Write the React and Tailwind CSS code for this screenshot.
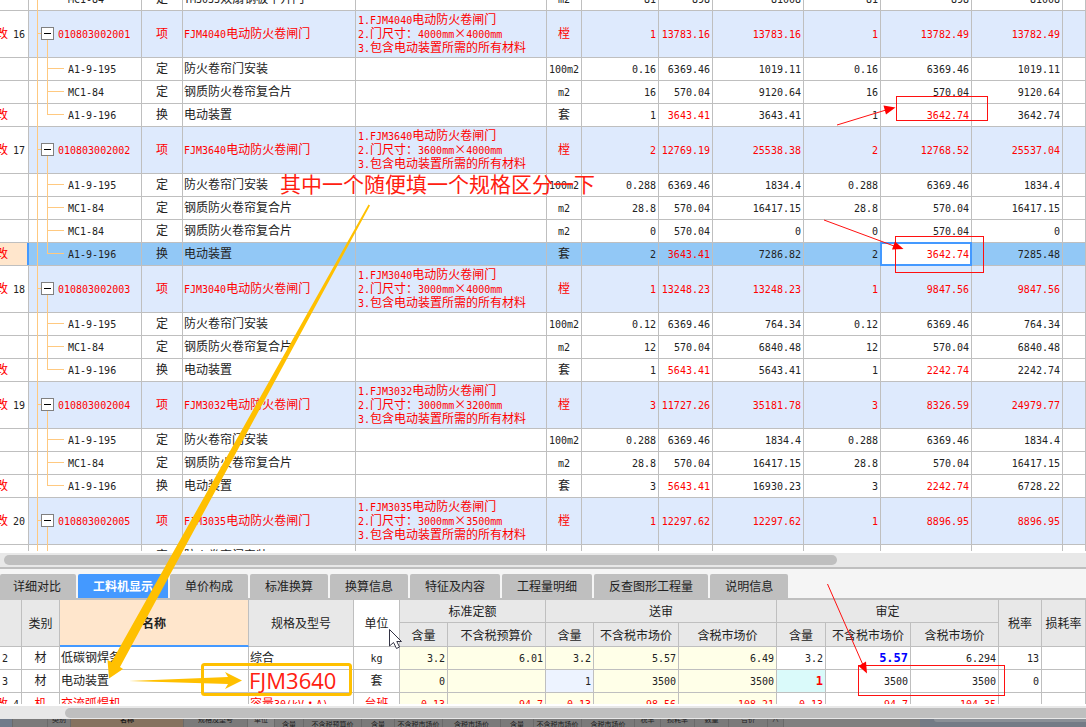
import React, { useState } from "react";

// theme
// grid line: #bfbfbf, item row: #deeafd, selected: #92c8f6, accent: #4499ff

const GROUPS = [
  {
    id: "prev",
    rows: [
      { code: "MC1-84", type: "定", name: "TM3033双扇钢板平开门", unit: "m2", v: ["81", "898", "81008", "81", "898", "81008"] },
    ],
  },
  {
    id: "16",
    code: "010803002001",
    name: "FJM4040电动防火卷闸门",
    size: "4000mm×4000mm",
    v: ["1", "13783.16", "13783.16", "1", "13782.49", "13782.49"],
    rows: [
      { code: "A1-9-195", type: "定", name: "防火卷帘门安装", unit: "100m2", v: ["0.16", "6369.46", "1019.11", "0.16", "6369.46", "1019.11"] },
      { code: "MC1-84", type: "定", name: "钢质防火卷帘复合片", unit: "m2", v: ["16", "570.04", "9120.64", "16", "570.04", "9120.64"] },
      { code: "A1-9-196", type: "换", name: "电动装置", unit: "套", changed: true, red: [1, 4], v: ["1", "3643.41", "3643.41", "1", "3642.74", "3642.74"] },
    ],
  },
  {
    id: "17",
    code: "010803002002",
    name: "FJM3640电动防火卷闸门",
    size: "3600mm×4000mm",
    v: ["2", "12769.19", "25538.38", "2", "12768.52", "25537.04"],
    rows: [
      { code: "A1-9-195", type: "定", name: "防火卷帘门安装", unit: "100m2", v: ["0.288", "6369.46", "1834.4", "0.288", "6369.46", "1834.4"] },
      { code: "MC1-84", type: "定", name: "钢质防火卷帘复合片", unit: "m2", v: ["28.8", "570.04", "16417.15", "28.8", "570.04", "16417.15"] },
      { code: "MC1-84", type: "定", name: "钢质防火卷帘复合片", unit: "m2", v: ["0", "570.04", "0", "0", "570.04", "0"] },
      { code: "A1-9-196", type: "换", name: "电动装置", unit: "套", changed: true, selected: true, red: [1, 4], v: ["2", "3643.41", "7286.82", "2", "3642.74", "7285.48"] },
    ],
  },
  {
    id: "18",
    code: "010803002003",
    name: "FJM3040电动防火卷闸门",
    size: "3000mm×4000mm",
    v: ["1", "13248.23", "13248.23", "1", "9847.56", "9847.56"],
    rows: [
      { code: "A1-9-195", type: "定", name: "防火卷帘门安装", unit: "100m2", v: ["0.12", "6369.46", "764.34", "0.12", "6369.46", "764.34"] },
      { code: "MC1-84", type: "定", name: "钢质防火卷帘复合片", unit: "m2", v: ["12", "570.04", "6840.48", "12", "570.04", "6840.48"] },
      { code: "A1-9-196", type: "换", name: "电动装置", unit: "套", changed: true, red: [1, 4], v: ["1", "5643.41", "5643.41", "1", "2242.74", "2242.74"] },
    ],
  },
  {
    id: "19",
    code: "010803002004",
    name: "FJM3032电动防火卷闸门",
    size: "3000mm×3200mm",
    v: ["3", "11727.26", "35181.78", "3", "8326.59", "24979.77"],
    rows: [
      { code: "A1-9-195", type: "定", name: "防火卷帘门安装", unit: "100m2", v: ["0.288", "6369.46", "1834.4", "0.288", "6369.46", "1834.4"] },
      { code: "MC1-84", type: "定", name: "钢质防火卷帘复合片", unit: "m2", v: ["28.8", "570.04", "16417.15", "28.8", "570.04", "16417.15"] },
      { code: "A1-9-196", type: "换", name: "电动装置", unit: "套", changed: true, red: [1, 4], v: ["3", "5643.41", "16930.23", "3", "2242.74", "6728.22"] },
    ],
  },
  {
    id: "20",
    code: "010803002005",
    name: "FJM3035电动防火卷闸门",
    size: "3000mm×3500mm",
    v: ["1", "12297.62", "12297.62", "1", "8896.95", "8896.95"],
    rows: [
      { code: "A1-9-195", type: "定", name: "防火卷帘门安装", unit: "100m2", v: ["0.288", "6369.46", "1834.4", "0.288", "6369.46", "1834.4"] },
      { code: "MC1-84", type: "定", name: "钢质防火卷帘复合片", unit: "m2", v: ["28.8", "570.04", "16417.15", "28.8", "570.04", "16417.15"] },
    ],
  },
];

const TABS = ["详细对比", "工料机显示", "单价构成", "标准换算", "换算信息", "特征及内容", "工程量明细", "反查图形工程量", "说明信息"];

const MATERIALS = [
  { no: "2", type: "材", name: "低碳钢焊条", spec: "综合", unit: "kg", v: ["3.2", "6.01", "3.2", "5.57", "6.49", "3.2", "5.57", "6.294"], tax: "13" },
  { no: "3", type: "材", name: "电动装置", spec: "", unit: "套", v: ["0", "", "1", "3500", "3500", "1", "3500", "3500"], tax: "0" },
  { no: "4", type: "机", name: "交流弧焊机", spec: "容量30(kV·A)", unit: "台班", changed: true, v: ["0.13", "94.7", "0.13", "98.56", "108.21", "0.13", "94.7", "104.35"], tax: "" },
];

// Latin runs use a half-width mono face next to the full-width Chinese glyphs
const Txt = ({ children }) => {
  const parts = String(children || "").match(/[\x20-\x7e]+|[×·]|[^\x20-\x7e×·]+/g) || [];
  return parts.map((part, i) => {
    if (part === "×" || part === "·") {
      return <span key={i} className="inline-block w-3 text-center leading-3">{part}</span>;
    }
    if (/^[\x20-\x7e]/.test(part)) {
      return <span key={i} className="font-['DejaVu_Sans_Mono',monospace] text-[10px] leading-none">{part}</span>;
    }
    return <React.Fragment key={i}>{part}</React.Fragment>;
  });
};

const Cell = ({ className = "", children }) => (
  <td className={`relative border-r border-b border-[#bfbfbf] pb-0.5 whitespace-nowrap ${className}`}>{children}</td>
);

const Gutter = ({ changed, no, selected }) => (
  <Cell className={selected ? "bg-[#ffe6cc]" : "bg-white"}>
    <div className="-ml-1 flex items-center gap-[5px]">
      {changed && <span className="text-[#ff0000]">改</span>}
      {no && <span className="text-[#222222]"><Txt>{no}</Txt></span>}
    </div>
    {selected && <span className="absolute inset-y-0 -right-px w-0.5 bg-[#4499ff]" />}
  </Cell>
);

const ItemRow = ({ group, open, onToggle }) => (
  <tr className="h-[47px] bg-[#deeafd] text-[#ff0000]">
    <Gutter changed no={group.id} />
    <Cell className="pl-[29px]">
      <span className="absolute -top-px -bottom-px left-2 w-px bg-[#ffc980]" />
      <span className="absolute top-1/2 left-2 -mt-px h-px w-1 bg-[#ffc980]" />
      {open && <span className="absolute top-1/2 -bottom-px left-[18px] w-px bg-[#ffc980]" />}
      <button
        type="button"
        aria-label="展开"
        aria-expanded={open}
        onClick={onToggle}
        className="absolute top-4 left-3 flex size-[13px] items-center justify-center border border-[#808080] bg-white"
      >
        <span className="h-px w-[7px] bg-black" />
        {!open && <span className="absolute h-[7px] w-px bg-black" />}
      </button>
      <Txt>{group.code}</Txt>
    </Cell>
    <Cell className="text-center">项</Cell>
    <Cell className="pl-px"><Txt>{group.name}</Txt></Cell>
    <Cell className="pl-0.5">
      <div><Txt>{"1." + group.name}</Txt></div>
      <div><Txt>{"2.门尺寸：" + group.size}</Txt></div>
      <div><Txt>3.包含电动装置所需的所有材料</Txt></div>
    </Cell>
    <Cell className="text-center">樘</Cell>
    {group.v.map((value, i) => (
      <Cell key={i} className="pr-0.5 text-right"><Txt>{value}</Txt></Cell>
    ))}
    <Cell />
  </tr>
);

const SubRow = ({ row, last }) => (
  <tr className={`h-[23px] ${row.selected ? "bg-[#92c8f6]" : "bg-white"}`}>
    <Gutter changed={row.changed} selected={row.selected} />
    <Cell className="pl-[39px]">
      <span className="absolute -top-px -bottom-px left-2 w-px bg-[#ffc980]" />
      <span className={`absolute -top-px left-[18px] w-px bg-[#ffc980] ${last ? "bottom-1/2" : "-bottom-px"}`} />
      <span className="absolute top-1/2 left-[18px] -mt-px h-px w-[17px] bg-[#ffc980]" />
      <Txt>{row.code}</Txt>
    </Cell>
    <Cell className="text-center">{row.type}</Cell>
    <Cell className="pl-px"><Txt>{row.name}</Txt></Cell>
    <Cell />
    <Cell className="text-center"><Txt>{row.unit}</Txt></Cell>
    {row.v.map((value, i) => (
      <Cell key={i} className={`pr-0.5 text-right ${row.red && row.red.includes(i) ? "text-[#ff0000]" : ""}`}>
        {row.selected && i === 4 && <span className="absolute -inset-px border-2 border-[#4499ff] bg-white" />}
        <span className="relative"><Txt>{value}</Txt></span>
      </Cell>
    ))}
    <Cell />
  </tr>
);

const BillGrid = () => {
  const [closed, setClosed] = useState([]);

  const toggle = (id) => {
    setClosed((prev) => (prev.includes(id) ? prev.filter((x) => x !== id) : [...prev, id]));
  };

  return (
    <div className="min-h-0 flex-1 overflow-hidden bg-white">
      {/* scrolled half a row down */}
      <table className="-mt-3 w-full table-fixed border-separate border-spacing-0">
        <colgroup>
          <col className="w-[29px]" />
          <col className="w-[113px]" />
          <col className="w-[41px]" />
          <col className="w-[173px]" />
          <col className="w-[191px]" />
          <col className="w-[35px]" />
          <col className="w-[77px]" />
          <col className="w-[54px]" />
          <col className="w-[91px]" />
          <col className="w-[77px]" />
          <col className="w-[91px]" />
          <col className="w-[91px]" />
          <col />
        </colgroup>
        <tbody>
          {GROUPS.map((group) => {
            const open = !closed.includes(group.id);
            return (
              <React.Fragment key={group.id}>
                {group.code && <ItemRow group={group} open={open} onToggle={() => toggle(group.id)} />}
                {open && group.rows.map((row, i) => (
                  <SubRow key={i} row={row} last={i === group.rows.length - 1} />
                ))}
              </React.Fragment>
            );
          })}
        </tbody>
      </table>
    </div>
  );
};

const Th = ({ className = "bg-[#e8e8e8] font-normal", children, ...rest }) => (
  <th {...rest} className={`border-r border-b border-[#bfbfbf] whitespace-nowrap ${className}`}>{children}</th>
);

// background of the value cells: quota and submitted columns are tinted
const valueStyle = (row, i) => {
  if (row.no === "3" && i === 2) return "bg-[#edf3ff]";
  if (row.no === "3" && i === 5) return "bg-[#dafafa] text-[#ff0000] font-bold [&>span]:text-xs [&>span]:leading-none";
  if (row.no === "2" && i === 6) return "text-[#0000ff] font-bold [&>span]:text-xs [&>span]:leading-none";
  return i < 5 ? "bg-[#ffffe8]" : "";
};

const MaterialGrid = () => (
  <div className="h-26 overflow-hidden bg-white">
    <table className="w-full table-fixed border-separate border-spacing-0">
      <colgroup>
        <col className="w-[22px]" />
        <col className="w-[38px]" />
        <col className="w-[189px]" />
        <col className="w-[105px]" />
        <col className="w-[46px]" />
        <col className="w-12" />
        <col className="w-[98px]" />
        <col className="w-12" />
        <col className="w-[85px]" />
        <col className="w-[98px]" />
        <col className="w-[49px]" />
        <col className="w-[85px]" />
        <col className="w-[88px]" />
        <col className="w-[43px]" />
        <col />
      </colgroup>
      <thead>
        <tr className="h-[23px]">
          <Th rowSpan={2} />
          <Th rowSpan={2}>类别</Th>
          <Th rowSpan={2} className="border-b-2 border-b-[#4499ff] bg-[#ffe6cc] font-bold">名称</Th>
          <Th rowSpan={2}>规格及型号</Th>
          <Th rowSpan={2} className="bg-white font-normal">单位</Th>
          <Th colSpan={2}>标准定额</Th>
          <Th colSpan={3}>送审</Th>
          <Th colSpan={3}>审定</Th>
          <Th rowSpan={2}>税率</Th>
          <Th rowSpan={2}>损耗率</Th>
        </tr>
        <tr className="h-6">
          <Th>含量</Th>
          <Th>不含税预算价</Th>
          <Th>含量</Th>
          <Th>不含税市场价</Th>
          <Th>含税市场价</Th>
          <Th>含量</Th>
          <Th>不含税市场价</Th>
          <Th>含税市场价</Th>
        </tr>
      </thead>
      <tbody>
        {MATERIALS.map((row) => (
          <tr key={row.no} className={`h-[23px] ${row.changed ? "text-[#ff0000]" : ""}`}>
            {row.changed ? (
              <Gutter changed no={row.no} />
            ) : (
              <Cell className="pl-0.5"><Txt>{row.no}</Txt></Cell>
            )}
            <Cell className="text-center">{row.type}</Cell>
            <Cell className="pl-px">{row.name}</Cell>
            <Cell className="pl-px"><Txt>{row.spec}</Txt></Cell>
            <Cell className="text-center"><Txt>{row.unit}</Txt></Cell>
            {row.v.map((value, i) => (
              <Cell key={i} className={`pr-0.5 text-right ${valueStyle(row, i)}`}><Txt>{value}</Txt></Cell>
            ))}
            <Cell className="pr-0.5 text-right"><Txt>{row.tax}</Txt></Cell>
            <Cell />
          </tr>
        ))}
      </tbody>
    </table>
  </div>
);

const DimCell = ({ className, low, children }) => (
  <span className={`shrink-0 border-r border-[#6a6a6a] text-center whitespace-nowrap ${low ? "pt-px" : "-mt-1"} ${className}`}>
    {children}
  </span>
);

// Dimmed strip of the window behind
const BackWindow = () => (
  <div className="flex h-2 overflow-hidden bg-[#7a7a7a] text-[7px] leading-[8px] text-[#1c1c1c]">
    <DimCell className="w-[13px] bg-[#707b8a]" />
    <DimCell className="w-[35px]" />
    <DimCell className="w-[23px]">类别</DimCell>
    <DimCell className="w-[113px] bg-[#85725f] font-bold">名称</DimCell>
    <DimCell className="w-16">规格及型号</DimCell>
    <DimCell className="w-[27px] bg-[#868686]">单位</DimCell>
    <DimCell low className="w-[29px]">含量</DimCell>
    <DimCell low className="w-[58px]">不含税预算价</DimCell>
    <DimCell low className="w-[33px]">含量</DimCell>
    <DimCell low className="w-[48px]">不含税市场价</DimCell>
    <DimCell low className="w-[58px]">含税市场价</DimCell>
    <DimCell low className="w-[33px]">含量</DimCell>
    <DimCell low className="w-12">不含税市场价</DimCell>
    <DimCell low className="w-[53px]">含税市场价</DimCell>
    <DimCell className="w-[26px]">税率</DimCell>
    <DimCell className="w-[34px]">损耗率</DimCell>
    <DimCell className="w-[34px]">数量</DimCell>
    <DimCell className="w-[39px]">合价</DimCell>
    <DimCell className="w-4">∧</DimCell>
    <span className="w-34 shrink-0 bg-[#808080]" />
    <span className="flex-1 bg-[#747b86] pl-3.5">
      <span className="block h-[3px] rounded-bl-sm bg-[#8b9097]" />
    </span>
  </div>
);

const Annotations = () => (
  <div className="pointer-events-none absolute inset-0 overflow-hidden">
    <svg className="absolute inset-0 size-full" aria-hidden="true">
      {/* yellow arrows */}
      <g fill="#ffc000">
        <polygon points="368.5,204.5 370,205.5 120,667 123,669 109,678.5 107.5,660 111.5,662" />
        <polygon points="129,681 228,677 225,672 242,680.5 225,689 228,684" />
      </g>
      <rect x="202.5" y="664.5" width="148" height="30" rx="2" fill="none" stroke="#ffc000" strokeWidth="3" />
      {/* red arrows */}
      <g stroke="#ff1010" fill="none">
        <path d="M837 125L886 110" />
        <path d="M824 220L894 246" />
        <path d="M827.5 584L863 665" />
        <rect x="896.5" y="96.5" width="91" height="24" />
        <rect x="895.5" y="236.5" width="88" height="36" />
        <rect x="858.5" y="665.5" width="146" height="30" />
      </g>
      <g fill="#ff0000">
        <polygon points="895.5,107.5 883.5,105.5 886,114.5" />
        <polygon points="903.5,249 895,241.5 892,249.5" />
        <polygon points="867,673.5 858.5,666 866,661.5" />
      </g>
      {/* mouse pointer */}
      <path
        d="M389.5 629.5V646L393.5 642.5L396.5 648.5L399.5 647L396.8 641.5H401.5Z"
        fill="#ffffff"
        stroke="#333344"
      />
    </svg>
    <p className="absolute top-[171px] left-[280px] text-[21px] leading-6 whitespace-nowrap text-[#ff2010]">
      其中一个随便填一个规格区分一下
    </p>
    <p className="absolute top-[668px] left-[249px] font-['Open_Sans',sans-serif] text-[22px] leading-6 text-[#ff2010]">
      FJM3640
    </p>
  </div>
);

const App = () => {
  const [activeTab, setActiveTab] = useState("工料机显示");

  return (
    <div className="relative flex h-screen flex-col overflow-hidden bg-white font-['Noto_Sans_CJK_SC',sans-serif] text-xs leading-[14px] text-[#222222]">
      <BillGrid />
      <div className="mt-0.5 border-b-2 border-[#bfbfbf] bg-[#e8e8e8] px-1 py-0.5">
        <div className="h-2.5 w-17/22 rounded-full bg-[#bfbfbf]" />
      </div>

      {/* Detail panel */}
      <div className="flex gap-0.5 border-b-2 border-[#bfbfbf] bg-[#f5f5f5] pt-[5px]">
        {TABS.map((tab, i) => (
          <button
            key={tab}
            type="button"
            onClick={() => setActiveTab(tab)}
            className={`h-6 shrink-0 rounded-t-xs pr-[15px] whitespace-nowrap ${i === 0 ? "pl-[13px]" : "pl-[15px]"} ${
              tab === activeTab ? "bg-[#4499ff] font-bold text-white" : "bg-[#bfbfbf]"
            }`}
          >
            {tab}
          </button>
        ))}
      </div>
      <MaterialGrid />
      <div className="mt-0.5 bg-[#e8e8e8] pt-0.5 pb-px pl-[65px]">
        <div className="h-2.5 rounded-l-full bg-[#bfbfbf]" />
      </div>
      <BackWindow />

      <Annotations />
    </div>
  );
};

export default App;
